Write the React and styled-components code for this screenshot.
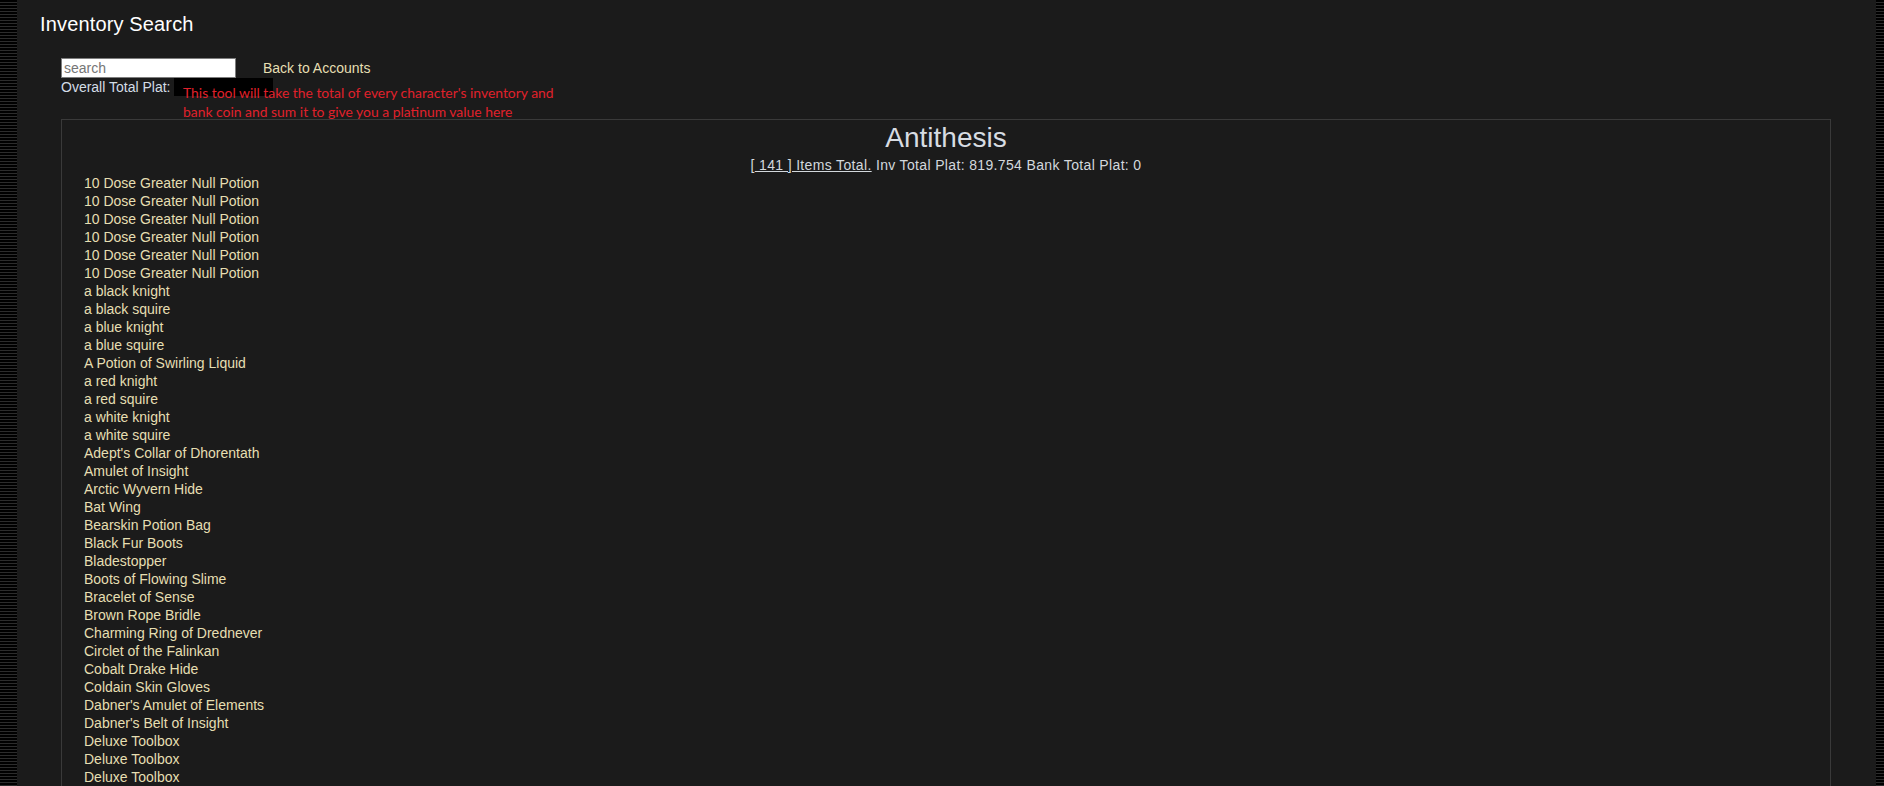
import React from "react";
import styled, { createGlobalStyle } from "styled-components";

const GlobalStyle = createGlobalStyle`
	html {
		background: repeating-linear-gradient(to bottom, #000 0px, #000 2px, #2c2c2c 2px, #2c2c2c 3px);
	}
	body {
		margin:		0;
		overflow:	hidden;
		font-family: "Liberation Sans", Arial, sans-serif;
	}
`;

const Page = styled.div`
	margin:			0 8px 0 17px;
	min-height:		100vh;
	background:		#1b1b1b;
	padding:		0 45px 0 0;
	box-sizing:		border-box;
`;

const Title = styled.h1`
	margin:			0;
	padding:		12px 0 0 23px;
	font-size:		20px;
	line-height:	24px;
	font-weight:	normal;
	letter-spacing:	0.15px;
	color:			#ffffff;
`;

const Controls = styled.div`
	margin-top:		22px;
	padding-left:	44px;
`;

const SearchRow = styled.div`
	display:		flex;
	align-items:	center;
	gap:			27px;
	height:			20px;
`;

const SearchInput = styled.input`
	width:			175px;
	height:			20px;
	box-sizing:		border-box;
	margin:			0;
	padding:		1px 2px;
	border:			1px solid #7d7d7d;
	background:		#fff;
	font-family:	"Liberation Sans", Arial, sans-serif;
	font-size:		14px;
	color:			#222;
	outline:		none;

	&::placeholder {
		color:	#767676;
	}
`;

const NavLink = styled.a`
	font-size:		14px;
	color:			#e6dfb2;
	text-decoration: none;
	cursor:			pointer;
`;

const PlatRow = styled.div`
	position:		relative;
	display:		flex;
	align-items:	center;
	gap:			4px;
	height:			18px;
	font-size:		14px;
	line-height:	18px;
	color:			#d3dde6;
`;

const PlatValue = styled.span`
	display:		inline-block;
	flex:			none;
	width:			99px;
	height:			18px;
	background:		#000;
`;

const Note = styled.div`
	position:		absolute;
	left:			122px;
	top:			6px;
	font-family:	Lato, "Open Sans", sans-serif;
	font-size:		13.9px;
	line-height:	18.5px;
	color:			#e0212b;
	white-space:	nowrap;
`;

const Panel = styled.div`
	margin:			23px 0 0 44px;
	border:			1px solid #3a3a3a;
	padding:		2px 0 0;
`;

const AccountName = styled.h2`
	margin:			0;
	text-align:		center;
	font-size:		28px;
	line-height:	32px;
	font-weight:	normal;
	color:			#d7dce2;
`;

const Summary = styled.div`
	margin-top:		2px;
	text-align:		center;
	font-size:		14px;
	line-height:	18px;
	letter-spacing:	0.35px;
	color:			#d3d8dd;

	a {
		color:			inherit;
		text-decoration: underline;
	}
`;

const ItemList = styled.ul`
	margin:			0;
	padding:		0 0 0 22px;
	list-style:		none;
`;

const Item = styled.li`
	font-size:		14px;
	line-height:	18px;
	color:			#e6dfb2;
`;

const items = [
	"10 Dose Greater Null Potion",
	"10 Dose Greater Null Potion",
	"10 Dose Greater Null Potion",
	"10 Dose Greater Null Potion",
	"10 Dose Greater Null Potion",
	"10 Dose Greater Null Potion",
	"a black knight",
	"a black squire",
	"a blue knight",
	"a blue squire",
	"A Potion of Swirling Liquid",
	"a red knight",
	"a red squire",
	"a white knight",
	"a white squire",
	"Adept's Collar of Dhorentath",
	"Amulet of Insight",
	"Arctic Wyvern Hide",
	"Bat Wing",
	"Bearskin Potion Bag",
	"Black Fur Boots",
	"Bladestopper",
	"Boots of Flowing Slime",
	"Bracelet of Sense",
	"Brown Rope Bridle",
	"Charming Ring of Drednever",
	"Circlet of the Falinkan",
	"Cobalt Drake Hide",
	"Coldain Skin Gloves",
	"Dabner's Amulet of Elements",
	"Dabner's Belt of Insight",
	"Deluxe Toolbox",
	"Deluxe Toolbox",
	"Deluxe Toolbox",
];

export default function App() {
	return (
		<>
			<GlobalStyle />
			<Page>
				<Title>Inventory Search</Title>
				<Controls>
					<SearchRow>
						<SearchInput type="text" placeholder="search" />
						<NavLink>Back to Accounts</NavLink>
					</SearchRow>
					<PlatRow>
						Overall Total Plat:
						<PlatValue />
						<Note>
							This tool will take the total of every character's inventory and
							<br />
							bank coin and sum it to give you a platinum value here
						</Note>
					</PlatRow>
				</Controls>
				<Panel>
					<AccountName>Antithesis</AccountName>
					<Summary>
						[<a> 141 ] Items Total.</a> Inv Total Plat: 819.754 Bank Total Plat: 0
					</Summary>
					<ItemList>
						{items.map((name, i) => (
							<Item key={i}>{name}</Item>
						))}
					</ItemList>
				</Panel>
			</Page>
		</>
	);
}
